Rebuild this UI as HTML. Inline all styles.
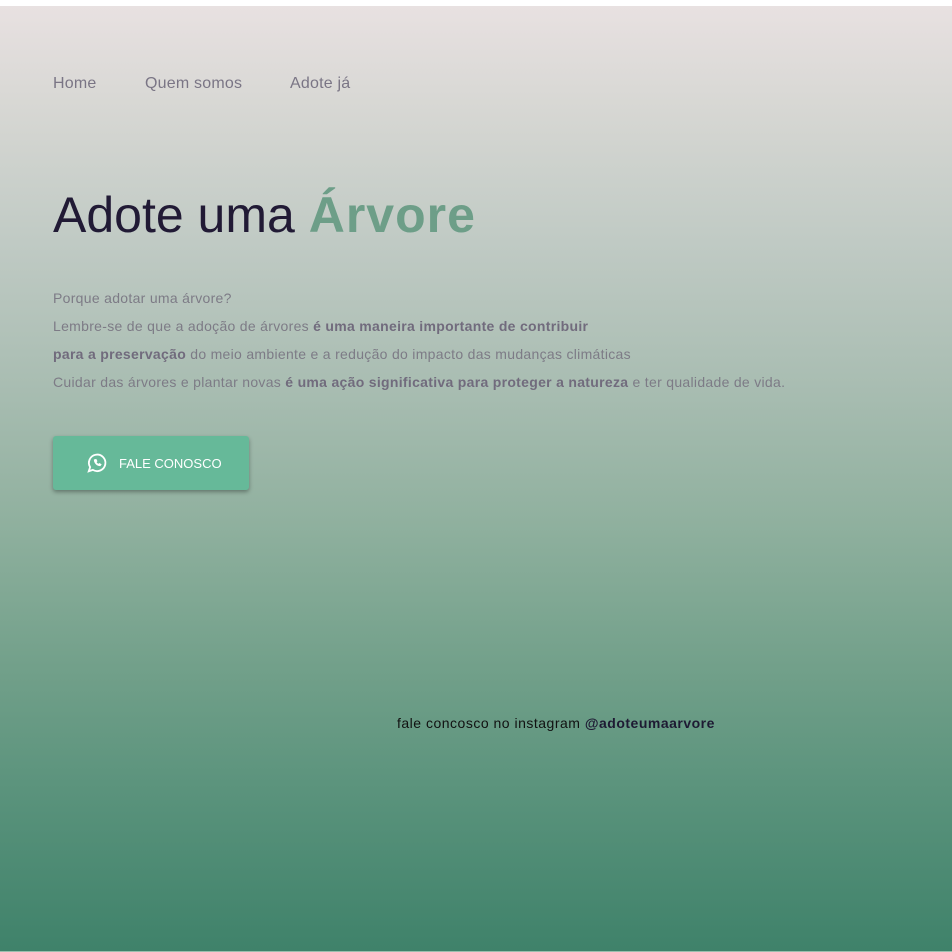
<!DOCTYPE html>
<html><head><meta charset="utf-8"><style>
html,body{margin:0;padding:0;width:952px;height:952px;overflow:hidden;}
body{background:#fff;font-family:"Liberation Sans",sans-serif;position:relative;}
.bg{position:absolute;left:0;top:6px;width:952px;height:945px;background:linear-gradient(to bottom,#e8e1e1 0%,#d5d6d2 12%,#c0cac4 25%,#a9bdb2 40%,#8fb09e 55%,#72a08a 70%,#57917a 85%,#3f826a 100%);}
.bl{position:absolute;left:0;top:951px;width:952px;height:1px;background:#9bbfae;}
.nav{position:absolute;top:75px;left:53px;font-size:16px;color:#7a7585;letter-spacing:0.2px;}
.nav span{position:absolute;white-space:nowrap;}
h1{position:absolute;left:53px;top:186px;margin:0;font-weight:normal;font-size:50px;color:#211a35;letter-spacing:0;white-space:nowrap;}
h1 b{font-weight:bold;color:#6d9e88;letter-spacing:1px;}
.p{position:absolute;left:53px;top:284px;font-size:14px;line-height:28px;color:#7d7b86;letter-spacing:0.3px;white-space:nowrap;}
.p b{color:#716b7d;}
.btn{position:absolute;left:53px;top:436px;width:196px;height:54px;background:#66b999;border-radius:3px;box-shadow:0 2px 4px rgba(0,0,0,.35);color:#fff;font-size:13px;}
.btn svg{position:absolute;left:33px;top:16px;}
.btn span{position:absolute;left:66px;top:20px;}
.ig{position:absolute;left:397px;top:715px;font-size:14px;color:#111;white-space:nowrap;letter-spacing:0.5px;}
.ig b{color:#1e1a33;}
</style></head><body>
<div class="bg"></div><div class="bl"></div>
<div class="nav"><span style="left:0">Home</span><span style="left:92px">Quem somos</span><span style="left:237px">Adote já</span></div>
<h1>Adote uma <b>Árvore</b></h1>
<div class="p">Porque adotar uma árvore?<br>Lembre-se de que a adoção de árvores <b>é uma maneira importante de contribuir</b><br><b>para a preservação</b> do meio ambiente e a redução do impacto das mudanças climáticas<br>Cuidar das árvores e plantar novas <b>é uma ação significativa para proteger a natureza</b> e ter qualidade de vida.</div>
<div class="btn"><svg width="22" height="22" viewBox="0 0 24 24" fill="none" stroke="#fff" stroke-width="2"><path d="M3 21l1.5-4.5A9 9 0 1 1 7.5 19.5z"/><path d="M9 8.5c0 3.5 3 6.5 6.5 6.5l1-1.5-2-1-1 1c-1-.5-2-1.5-2.5-2.5l1-1-1-2z" fill="#fff" stroke-width="0.8"/></svg><span>FALE CONOSCO</span></div>
<div class="ig">fale concosco no instagram <b>@adoteumaarvore</b></div>
</body></html>
